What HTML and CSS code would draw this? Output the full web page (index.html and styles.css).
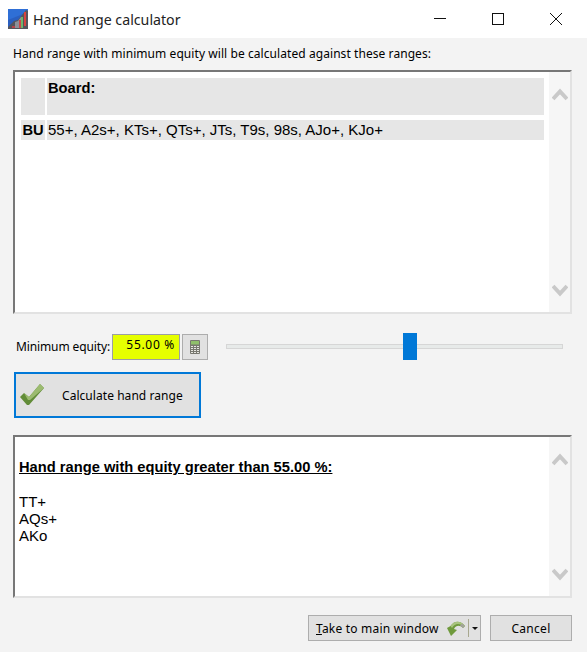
FILE: index.html
```html
<!DOCTYPE html>
<html lang="en">
<head>
    <meta charset="UTF-8">
    <title>Hand range calculator</title>
    <link rel="stylesheet" href="styles.css">
</head>
<body>
<div class="window">
    <div class="titlebar">
        <svg class="app-icon" width="20" height="20" viewBox="0 0 20 20">
            <rect width="20" height="20" fill="#2a5fc0"/>
            <path d="M0 0H20V3L0 11Z" fill="#2f6fd6"/>
            <path d="M0 20V18L6 12L10 11L14 6L18 1L20 2V20Z" fill="#55555c"/>
            <path d="M7 13L10 12L13 8L13 19H7Z" fill="#8d9098"/>
            <rect x="4" y="17" width="3" height="2" fill="#b8434a"/>
            <rect x="11" y="11" width="2" height="8" fill="#c8474a"/>
            <rect x="13" y="8" width="2" height="11" fill="#6fb56a"/>
            <rect x="16" y="3" width="2" height="14" fill="#d8433f"/>
        </svg>
        <span class="title">Hand range calculator</span>
        <div class="window-buttons">
            <svg width="14" height="14" viewBox="0 0 14 14"><path d="M1 6.5H13" stroke="#111" fill="none"/></svg>
            <svg width="14" height="14" viewBox="0 0 14 14"><rect x="1.5" y="1.5" width="11" height="11" stroke="#111" fill="none"/></svg>
            <svg width="14" height="14" viewBox="0 0 14 14"><path d="M1 1L13 13M13 1L1 13" stroke="#111" fill="none"/></svg>
        </div>
    </div>

    <div class="content">
        <div class="intro">Hand range with minimum equity will be calculated against these ranges:</div>

        <div class="panel panel-top">
            <div class="panel-body ranges">
                <div class="range-row board-row">
                    <div class="cell pos"></div>
                    <div class="cell range"><b>Board:</b></div>
                </div>
                <div class="range-row">
                    <div class="cell pos"><b>BU</b></div>
                    <div class="cell range">55+, A2s+, KTs+, QTs+, JTs, T9s, 98s, AJo+, KJo+</div>
                </div>
            </div>
            <div class="scrollbar">
                <svg width="16" height="14" viewBox="0 0 16 14"><path d="M1 12L8 4.500L15 12" stroke="#c9c9c9" stroke-width="4" fill="none"/></svg>
                <svg width="16" height="14" viewBox="0 0 16 14"><path d="M1 2L8 9.500L15 2" stroke="#c9c9c9" stroke-width="4" fill="none"/></svg>
            </div>
        </div>

        <div class="equity-row">
            <span class="equity-label">Minimum equity:</span>
            <div class="equity-value">55.00 %</div>
            <div class="calc-button">
                <svg width="10" height="14" viewBox="0 0 10 14">
                    <rect width="10" height="14" rx="1" fill="#77776f"/>
                    <rect x="1" y="1" width="8" height="3.500" fill="#8fbf6a"/>
                    <path d="M1 6.500H9M1 8.500H9M1 10.500H9M1 12.500H9" stroke="#e6e6e1" stroke-dasharray="2 1" fill="none"/>
                </svg>
            </div>
            <div class="slider">
                <div class="slider-thumb"></div>
            </div>
        </div>

        <div class="calc-range">
            <svg width="24" height="22" viewBox="0 0 24 22">
                <path d="M0 13L4 9L9 13L20 0L24 4L9 21H7Z" fill="#628c38"/>
                <path d="M4 9L9 13L20 0L24 4L10 16L8 16Z" fill="#9cbb70"/>
            </svg>
            <span>Calculate hand range</span>
        </div>

        <div class="panel panel-result">
            <div class="panel-body result">
                <div class="result-title">Hand range with equity greater than 55.00 %:</div>
                <div>TT+</div>
                <div>AQs+</div>
                <div>AKo</div>
            </div>
            <div class="scrollbar">
                <svg width="16" height="14" viewBox="0 0 16 14"><path d="M1 12L8 4.500L15 12" stroke="#c9c9c9" stroke-width="4" fill="none"/></svg>
                <svg width="16" height="14" viewBox="0 0 16 14"><path d="M1 2L8 9.500L15 2" stroke="#c9c9c9" stroke-width="4" fill="none"/></svg>
            </div>
        </div>

        <div class="footer">
            <div class="button take-button">
                <span class="take-label"><u>T</u>ake to main window</span>
                <svg width="18" height="16" viewBox="0 0 18 16">
                    <path d="M0 8L3.500 6C7 1 13 0 18 6L16 8C13 5 9 5 7 9L10 10L4 16Z" fill="#6f9a3c"/>
                    <path d="M3.500 6C7 1 13 0 18 6L17 7C13 3 8 3 5 8Z" fill="#a8c47e"/>
                    <path d="M15 3.500L18 6L16 8L13 5.500Z" fill="#a3a39b"/>
                </svg>
                <span class="take-split"></span>
                <span class="take-arrow"></span>
            </div>
            <div class="button cancel-button">Cancel</div>
        </div>
    </div>
</div>
</body>
</html>
```

FILE: styles.css
```css
body, html {
    margin: 0;
    padding: 0;
    height: 100%;
    overflow: hidden;
    font-family: "Noto Sans", "Open Sans", sans-serif;
    font-size: 12px;
    color: #000;
}
.window {
    width: 587px;
    height: 652px;
    background-color: #f3f3f3;
    display: flex;
    flex-direction: column;
}
.titlebar {
    height: 38px;
    background-color: #ffffff;
    display: flex;
    align-items: center;
    flex-shrink: 0;
}
.app-icon {
    margin-left: 8px;
}
.title {
    margin-left: 5px;
    font-size: 14.2px;
    color: #222;
}
.window-buttons {
    margin-left: auto;
    margin-right: 24px;
    display: flex;
    gap: 44px;
}
.content {
    padding: 8px 15px 0 13px;
    display: flex;
    flex-direction: column;
}
.intro {
    height: 16px;
    line-height: 16px;
    margin-bottom: 8px;
    white-space: nowrap;
    letter-spacing: 0.07px;
}
.panel {
    display: flex;
    width: 559px;
    box-sizing: border-box;
    background-color: #ffffff;
    border-top: 2px solid #777777;
    border-left: 2px solid #777777;
    border-right: 2px solid #e2e2e2;
    border-bottom: 2px solid #e2e2e2;
}
.panel-top {
    height: 244px;
}
.panel-result {
    height: 163px;
}
.panel-body {
    flex: 1;
    font-family: "Liberation Sans", Arial, sans-serif;
    font-size: 15px;
    color: #000;
}
.panel-body b {
    font-size: 14.7px;
}
.scrollbar {
    width: 21px;
    background-color: #f6f6f6;
    display: flex;
    flex-direction: column;
    justify-content: space-between;
    align-items: center;
    padding: 15px 0 14px;
    box-sizing: border-box;
}
.ranges {
    padding: 6px 5px 0 6px;
}
.range-row {
    display: flex;
    gap: 2px;
    margin-bottom: 5px;
    height: 20px;
    line-height: 20px;
}
.board-row {
    height: 37px;
}
.cell {
    background-color: #e6e6e6;
}
.pos {
    width: 24px;
    flex-shrink: 0;
    text-align: center;
}
.range {
    flex: 1;
    padding-left: 1px;
    white-space: nowrap;
}
.equity-row {
    display: flex;
    align-items: center;
    height: 27px;
    margin-top: 19px;
}
.equity-label {
    margin-left: 3px;
    width: 96px;
    white-space: nowrap;
    letter-spacing: -0.12px;
}
.equity-value {
    width: 68px;
    height: 26px;
    line-height: 20px;
    box-sizing: border-box;
    border: 1px solid #9c9fa3;
    background-color: #e6ff00;
    text-align: right;
    padding-right: 4px;
    letter-spacing: 0.7px;
}
.calc-button {
    width: 26px;
    height: 26px;
    margin-left: 2px;
    box-sizing: border-box;
    border: 1px solid #adadad;
    background-color: #e1e1e1;
    display: flex;
    align-items: center;
    justify-content: center;
}
.slider {
    position: relative;
    margin-left: 18px;
    width: 337px;
    height: 5px;
    box-sizing: border-box;
    background-color: #e7eae9;
    border: 1px solid #d6d6d6;
}
.slider-thumb {
    position: absolute;
    left: 176px;
    top: -12px;
    width: 14px;
    height: 27px;
    background-color: #0078d7;
}
.calc-range {
    margin-top: 12px;
    margin-left: 1px;
    width: 187px;
    height: 46px;
    box-sizing: border-box;
    border: 2px solid #0078d7;
    background-color: #e1e1e1;
    display: flex;
    align-items: center;
    padding-left: 4px;
}
.calc-range span {
    margin-left: 18px;
    white-space: nowrap;
    letter-spacing: 0.05px;
}
.panel-result {
    margin-top: 17px;
}
.result {
    padding: 22px 0 0 4px;
    line-height: 17px;
}
.result-title {
    font-size: 14.7px;
    font-weight: bold;
    text-decoration: underline;
    margin-bottom: 17px;
}
.footer {
    display: flex;
    justify-content: flex-end;
    gap: 9px;
    margin-top: 17px;
    width: 559px;
}
.button {
    height: 26px;
    box-sizing: border-box;
    border: 1px solid #adadad;
    background-color: #e1e1e1;
    display: flex;
    align-items: center;
}
.take-button {
    width: 173px;
    padding-left: 7px;
}
.take-label {
    white-space: nowrap;
    width: 131px;
    letter-spacing: 0.2px;
}
.take-split {
    width: 1px;
    height: 18px;
    background-color: #a8a88f;
    margin-left: 3px;
}
.take-arrow {
    width: 0;
    height: 0;
    margin-left: 3px;
    border-left: 3px solid transparent;
    border-right: 3px solid transparent;
    border-top: 3px solid #111;
}
.cancel-button {
    width: 82px;
    justify-content: center;
    letter-spacing: 0.3px;
}
```
